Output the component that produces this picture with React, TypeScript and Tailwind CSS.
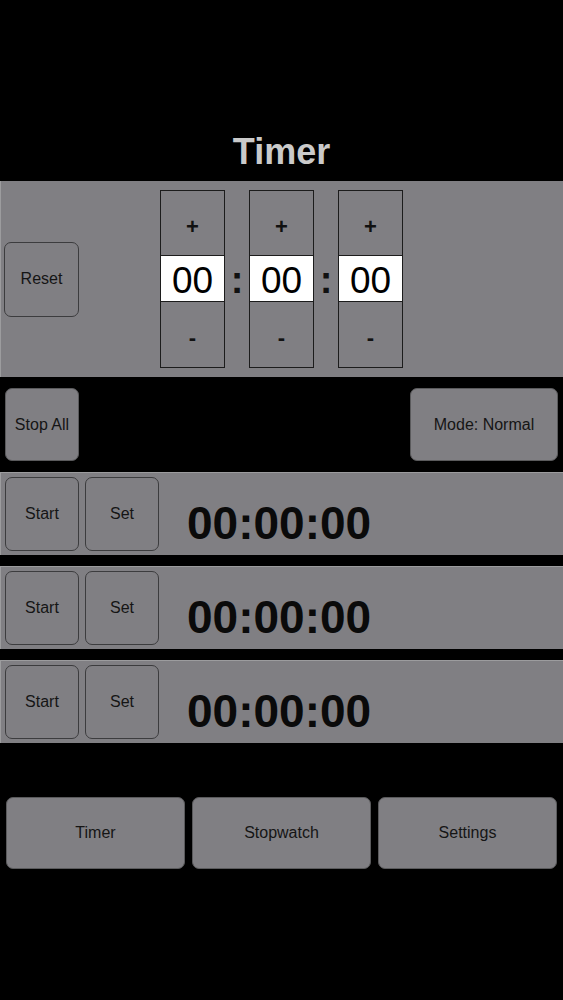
import React from 'react';

const font = { fontFamily: '"Liberation Sans", Arial, sans-serif' };

function Btn({ label, className }: { label: string; className: string }) {
  return (
    <button
      className={`flex items-center justify-center rounded-[7px] border border-[#3c3c3e] bg-[#807f83] text-[16px] text-[#151515] ${className}`}
    >
      {label}
    </button>
  );
}

function Spinner() {
  return (
    <div className="flex w-[65px] flex-col border border-[#1c1c1c]">
      <div className="flex h-[64px] items-center justify-center pt-[6px] text-[22px] font-bold text-[#111]">+</div>
      <div className="flex h-[47px] items-center justify-center border-y-[1.5px] border-[#1c1c1c] bg-white pt-[4px] text-[37px] leading-none text-black">
        00
      </div>
      <div className="flex h-[65px] items-center justify-center pt-[6px] text-[22px] font-bold text-[#111]">-</div>
    </div>
  );
}

function Colon() {
  return <div className="flex w-[24px] items-center justify-center pt-[2px] text-[38px] font-bold leading-none text-[#111]">:</div>;
}

function TimerRow() {
  return (
    <div className="flex h-[83px] items-start gap-[6px] border-t border-l border-[#9c9c9e] bg-[#807f83] pl-[4px] pt-[4px]">
      <Btn label="Start" className="h-[74px] w-[74px]" />
      <Btn label="Set" className="h-[74px] w-[74px]" />
      <div className="ml-[22px] self-center pt-[14px] text-[46px] font-bold leading-none text-[#0a0a0a]">00:00:00</div>
    </div>
  );
}

export default function App() {
  return (
    <div className="h-[1000px] w-full bg-black" style={font}>
      <div className="flex h-[181px] items-end justify-center pb-[9px]">
        <h1 className="text-[36px] font-bold leading-[40px] text-[#cacaca]">Timer</h1>
      </div>

      <div className="flex h-[196px] items-center border-l border-[#9c9c9e] bg-[#807f83] pl-[3px]">
        <Btn label="Reset" className="h-[75px] w-[75px]" />
        <div className="ml-[81px] flex">
          <Spinner />
          <Colon />
          <Spinner />
          <Colon />
          <Spinner />
        </div>
      </div>

      <div className="flex h-[95px] items-center justify-between px-[5px]">
        <Btn label="Stop All" className="h-[73px] w-[74px] border-[#5a5a5c]" />
        <Btn label="Mode: Normal" className="h-[73px] w-[148px] border-[#5a5a5c]" />
      </div>

      <div className="flex flex-col gap-[11px]">
        <TimerRow />
        <TimerRow />
        <TimerRow />
      </div>

      <div className="mt-[54px] flex gap-[7px] px-[6px]">
        <Btn label="Timer" className="h-[72px] w-[179px] border-[#5a5a5c]" />
        <Btn label="Stopwatch" className="h-[72px] w-[179px] border-[#5a5a5c]" />
        <Btn label="Settings" className="h-[72px] w-[179px] border-[#5a5a5c]" />
      </div>
    </div>
  );
}
